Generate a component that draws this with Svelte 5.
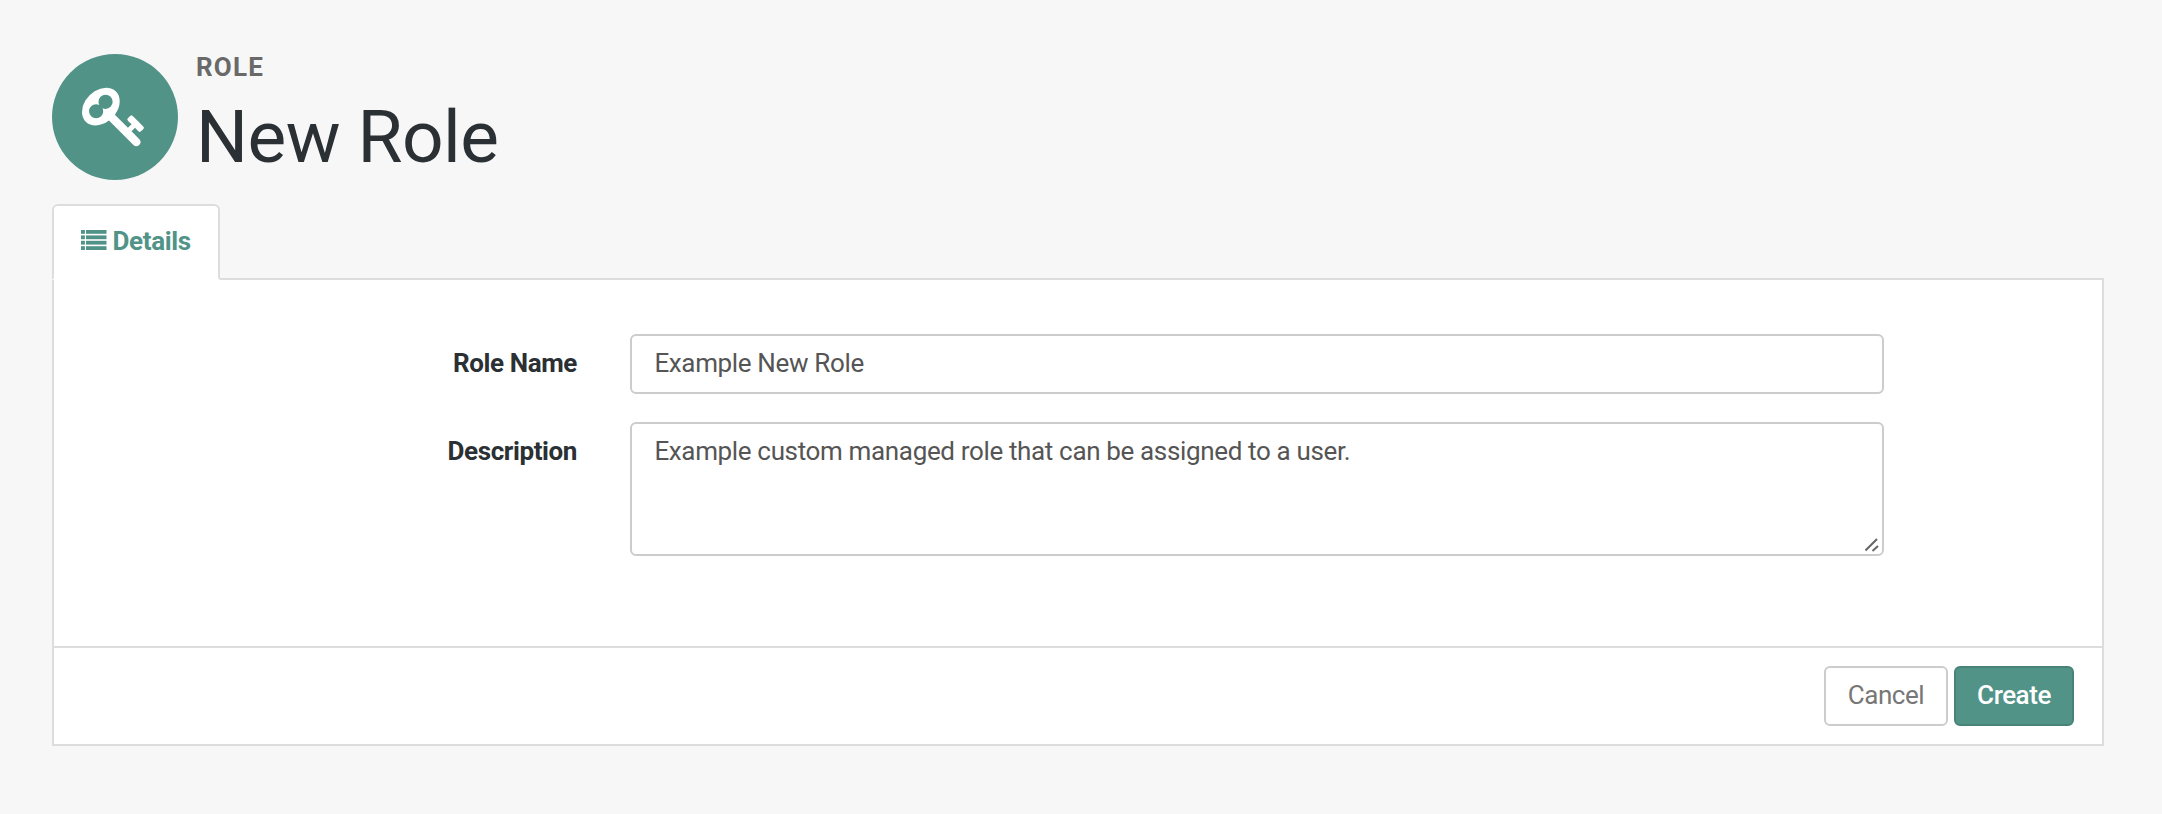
<script>
  let name = $state('Example New Role');
  let description = $state('Example custom managed role that can be assigned to a user.');
  const rows = [0, 1, 2, 3];
</script>

<main>
  <header>
    <div class="avatar">
      <svg class="key" viewBox="0 0 1792 1792">
        <path d="M832 512q0-80-56-136t-136-56-136 56-56 136q0 42 19 83-41-19-83-19-80 0-136 56t-56 136 56 136 136 56 136-56 56-136q0-42-19-83 41 19 83 19 80 0 136-56t56-136zm851 704q0 17-49 66t-66 49q-9 0-28.5-16t-36.5-33-38.5-40-24.5-26l-96 96 220 220q28 28 28 68 0 42-39 81t-81 39q-40 0-68-28l-671-671q-176 131-365 131-163 0-265.5-102.5t-102.5-265.5q0-160 95-313t248-248 313-95q163 0 265.5 102.5t102.5 265.5q0 189-131 365l355 355 96-96q-3-3-26-24.5t-40-38.5-33-36.5-16-28.5q0-17 49-66t66-49q13 0 23 10 6 6 46 44.5t82 79.5 86.5 86 73 78 28.5 41z" />
      </svg>
    </div>
    <div class="heading">
      <div class="kind">ROLE</div>
      <h1>New Role</h1>
    </div>
  </header>

  <nav>
    <button class="tab" type="button">
      <svg class="list" width="26" height="20" viewBox="0 0 26 20">
        {#each rows as r}
          <rect x="0" y={r * 5.4} width="3.9" height="3.8" />
          <rect x="5" y={r * 5.4} width="20.5" height="3.8" />
        {/each}
      </svg>
      <span>Details</span>
    </button>
  </nav>

  <form class="panel" onsubmit={(e) => e.preventDefault()}>
    <div class="fields">
      <label for="name">Role Name</label>
      <input id="name" type="text" bind:value={name} />
      <label for="description">Description</label>
      <div class="area">
        <textarea id="description" spellcheck="false" bind:value={description}></textarea>
        <svg class="grip" width="14" height="14" viewBox="0 0 14 14">
          <path d="M0.5 12.5L12 1M7.5 13L13 8" />
        </svg>
      </div>
    </div>
    <footer>
      <button class="btn" type="button"><span>Cancel</span></button>
      <button class="btn primary" type="submit"><span>Create</span></button>
    </footer>
  </form>
</main>

<style>
  :global(body) {
    background: #f7f7f7;
  }
  main, main * {
    box-sizing: border-box;
  }
  main {
    height: 814px;
    padding: 54px 58px 0 52px;
    font-family: Roboto, sans-serif;
    font-size: 26px;
    line-height: 36px;
    color: #2a3033;
  }
  header {
    display: flex;
    height: 150px;
  }
  .avatar {
    display: flex;
    align-items: center;
    justify-content: center;
    width: 126px;
    height: 126px;
    padding: 0 0 3px 0;
    border-radius: 50%;
    background: #519387;
  }
  .key {
    width: 66px;
    height: 66px;
    fill: #fff;
  }
  .heading {
    padding-left: 18px;
  }
  .kind {
    height: 36px;
    margin-top: -5px;
    font-weight: 700;
    letter-spacing: 1.2px;
    color: #696969;
  }
  h1 {
    margin: 9px 0 0;
    font-size: 73px;
    line-height: 86px;
    font-weight: 400;
    letter-spacing: -0.55px;
  }
  nav {
    display: flex;
    height: 74px;
  }
  .tab {
    display: flex;
    align-items: center;
    gap: 5.5px;
    width: 168px;
    height: 76px;
    padding: 0 0 2px 27px;
    border: 2px solid #ddd;
    border-bottom-color: #fff;
    border-radius: 6px 6px 0 0;
    background: #fff;
    color: #519387;
    font: 700 26px/36px Roboto, sans-serif;
    letter-spacing: -0.35px;
    z-index: 1;
  }
  .list {
    margin-top: -2px;
    fill: #519387;
  }
  .panel {
    height: 468px;
    border: 2px solid #ddd;
    background: #fff;
  }
  .fields {
    display: grid;
    grid-template-columns: 523px 1254px;
    grid-template-rows: 60px 134px;
    column-gap: 53px;
    row-gap: 28px;
    height: 366px;
    padding-top: 54px;
  }
  label {
    padding-top: 11px;
    text-align: right;
    font-weight: 700;
    letter-spacing: -0.4px;
  }
  input, textarea {
    display: block;
    width: 100%;
    height: 100%;
    margin: 0;
    padding: 0 22px 2px 22.4px;
    border: 2px solid #ccc;
    border-radius: 6px;
    outline: 0;
    background: #fff;
    color: #555;
    font: 400 26px/36px Roboto, sans-serif;
    letter-spacing: -0.35px;
  }
  textarea {
    padding-top: 9px;
    resize: none;
  }
  .area {
    position: relative;
  }
  .grip {
    position: absolute;
    right: 5px;
    bottom: 4px;
    fill: none;
    stroke: #666;
    stroke-width: 2;
  }
  footer {
    display: flex;
    justify-content: flex-end;
    gap: 6px;
    padding: 18px 28px 0 0;
    border-top: 2px solid #ddd;
  }
  .btn {
    width: 124px;
    height: 60px;
    padding: 0 0 2px;
    border: 2px solid #ccc;
    border-radius: 6px;
    background: #fff;
    color: #777;
    font: 400 26px/36px Roboto, sans-serif;
    letter-spacing: -0.45px;
  }
  .primary {
    width: 120px;
    border-color: #488378;
    background: #519387;
    color: #fff;
    font-weight: 500;
  }
</style>
